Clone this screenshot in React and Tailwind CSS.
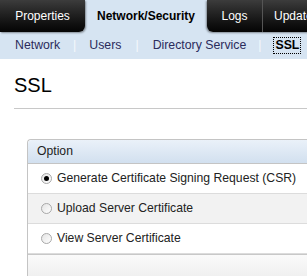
import React from "react";

const Radio = ({ checked }) => (
    <span className="flex h-[11px] w-[11px] items-center justify-center rounded-full border border-[#a8a8a8] bg-gradient-to-br from-[#e4e4e4] to-white">
        {checked && <span className="h-[5px] w-[5px] rounded-full bg-black" />}
    </span>
);

const App = () => {
    const options = [
        { label: "Generate Certificate Signing Request (CSR)", checked: true, bg: "bg-white" },
        { label: "Upload Server Certificate", checked: false, bg: "bg-[#f2f2f2]" },
        { label: "View Server Certificate", checked: false, bg: "bg-white" },
    ];

    return (
        <div className="h-[276px] w-[307px] overflow-hidden bg-white font-['Liberation_Sans',Arial,sans-serif]">
            {/* top tabs */}
            <div className="flex h-[32px] bg-[#d6e4f2] text-[12px]">
                <div className="flex w-[85px] shrink-0 items-center justify-center rounded-br-[6px] bg-gradient-to-b from-[#3c3c3c] to-[#050505] text-white shadow-[1px_1px_2px_rgba(0,0,0,0.4)]">
                    Properties
                </div>
                <div className="flex w-[122px] shrink-0 items-center justify-center font-bold text-black">Network/Security</div>
                <div className="flex flex-1 rounded-bl-[6px] bg-gradient-to-b from-[#3c3c3c] to-[#050505] text-white shadow-[-1px_1px_2px_rgba(0,0,0,0.4)]">
                    <div className="flex w-[55px] shrink-0 items-center justify-center">Logs</div>
                    <div className="flex flex-1 items-center border-l border-[#555] pl-[11px] whitespace-nowrap">Update</div>
                </div>
            </div>

            {/* sub nav */}
            <div className="flex h-[27px] items-center bg-[#d6e4f2] pl-[15px] text-[12.3px] text-[#2b2b5c] whitespace-nowrap">
                <span>Network</span>
                <span className="mx-[13px] text-[#f4f8fc]">|</span>
                <span>Users</span>
                <span className="mx-[14px] text-[#f4f8fc]">|</span>
                <span>Directory Service</span>
                <span className="mx-[12px] text-[#f4f8fc]">|</span>
                <span className="border border-dotted border-black px-[1px] font-bold leading-[15px] text-black">SSL</span>
            </div>

            {/* title */}
            <div className="pl-[14px] pt-[14px]">
                <h1 className="text-[20px] leading-[24px] text-black">SSL</h1>
                <div className="mt-[11px] h-px bg-[#c8c8c8]" />
            </div>

            {/* option box */}
            <div className="ml-[27px] mt-[30px] rounded-tl-[4px] border-l border-t border-[#c4c4c4] text-[12.2px] text-[#222]">
                <div className="flex h-[24px] items-center rounded-tl-[4px] border-b border-[#c4c4c4] bg-gradient-to-b from-[#eaf1f9] to-[#d2e0ef] pl-[9px]">
                    Option
                </div>
                {options.map((option) => (
                    <div
                        key={option.label}
                        className={`flex h-[30px] items-center gap-[5px] border-b border-[#dcdcdc] pl-[13px] ${option.bg}`}
                    >
                        <Radio checked={option.checked} />
                        <span className="whitespace-nowrap">{option.label}</span>
                    </div>
                ))}
                <div className="h-[30px] border-t border-[#c8c8c8] bg-gradient-to-b from-[#fafafa] to-[#ececec]" />
            </div>
        </div>
    );
};

export default App;
